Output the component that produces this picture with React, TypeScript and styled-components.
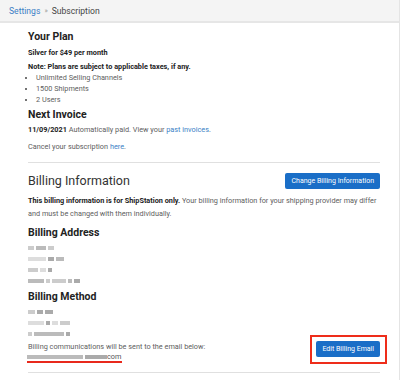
import React from "react";
import styled, { createGlobalStyle } from "styled-components";

const Global = createGlobalStyle`
  html, body { margin: 0; padding: 0; background: #fff; }
  body { font-family: Roboto, "Liberation Sans", Arial, sans-serif; color: #333; }
`;

const Page = styled.div`
  width: 400px;
  height: 380px;
  overflow: hidden;
  border-right: 1px solid #e4e4e4;
  box-sizing: border-box;
`;

const TopBar = styled.div`
  height: 21px;
  background: #f4f4f4;
  border-bottom: 2px solid #e6e6e6;
  display: flex;
  align-items: center;
  padding-left: 9px;
  font-size: 8.6px;
  color: #444;
  gap: 4px;
`;

const Crumb = styled.a`
  color: #3c7fc6;
  text-decoration: none;
`;

const Sep = styled.span`
  color: #999;
  font-size: 7px;
`;

const Content = styled.div`
  padding: 7px 12px 0 28px;
  display: flex;
  flex-direction: column;
`;

const H2 = styled.h2<{ $mt?: number }>`
  margin: ${(p) => p.$mt ?? 0}px 0 0 0;
  font-size: 10.5px;
  font-weight: 700;
  color: #222;
  line-height: 14px;
`;

const Bold = styled.div<{ $mt?: number }>`
  margin-top: ${(p) => p.$mt ?? 0}px;
  font-size: 7.3px;
  font-weight: 700;
  color: #222;
  line-height: 10px;
`;

const List = styled.ul`
  margin: 0;
  padding-left: 8px;
  list-style: disc;
  font-size: 7.3px;
  color: #606060;
  line-height: 11px;
  li::marker { font-size: 6px; color: #444; }
`;

const Text = styled.p<{ $mt?: number; $lh?: number }>`
  margin: ${(p) => p.$mt ?? 0}px 0 0 0;
  font-size: 7.3px;
  color: #606060;
  line-height: ${(p) => p.$lh ?? 10}px;
  strong { color: #222; font-weight: 700; }
`;

const Link = styled.a`
  color: #3c7fc6;
  text-decoration: none;
`;

const Rule = styled.hr<{ $mt?: number }>`
  border: 0;
  border-top: 1px solid #e0e0e0;
  margin: ${(p) => p.$mt ?? 0}px 0 0 0;
  width: 352px;
`;

const SectionHead = styled.div`
  display: flex;
  align-items: center;
  justify-content: space-between;
  margin-top: 10px;
  width: 352px;
`;

const H1 = styled.h1`
  margin: 0;
  font-size: 12.5px;
  font-weight: 400;
  color: #333;
  line-height: 16px;
`;

const Button = styled.button`
  background: #1a6ec7;
  color: #fff;
  border: 0;
  border-radius: 2px;
  height: 16px;
  padding: 0 6px;
  font-family: inherit;
  font-size: 7px;
  line-height: 16px;
  cursor: pointer;
`;

const RedactedLine = styled.div`
  display: flex;
  gap: 2px;
  height: 11px;
  align-items: center;
`;

const Blob = styled.span<{ $w: number; $shade: string }>`
  display: inline-block;
  width: ${(p) => p.$w}px;
  height: 4px;
  background: ${(p) => p.$shade};
  filter: blur(0.6px);
`;

const EmailRow = styled.div`
  display: flex;
  align-items: flex-end;
  justify-content: space-between;
  width: 352px;
  margin-top: -4px;
`;

const EmailText = styled.div`
  display: flex;
  flex-direction: column;
  margin-bottom: 1px;
`;

const Email = styled.div`
  display: inline-flex;
  align-items: center;
  align-self: flex-start;
  height: 9px;
  font-size: 7.3px;
  color: #555;
  border-bottom: 2px solid #e8291c;
  padding-right: 1px;
  margin-left: -1px;
`;

const RedBox = styled.div`
  border: 2px solid #ee2d1a;
  padding: 4px 5px 5px 4px;
  margin-right: -7px;
  display: flex;
`;

type L = [number, string][];
const addr: L[] = [
  [[6, "#ccc"], [10, "#bbb"], [6, "#ccc"]],
  [[18, "#ddd"], [6, "#aaa"], [8, "#bbb"]],
  [[10, "#ccc"], [6, "#ddd"], [4, "#aaa"]],
  [[16, "#bbb"], [4, "#ccc"], [14, "#ccc"], [4, "#bbb"], [6, "#aaa"]],
];
const method: L[] = [
  [[7, "#ccc"], [6, "#aaa"], [8, "#aaa"]],
  [[16, "#ddd"], [4, "#aaa"], [6, "#ddd"], [10, "#ccc"]],
  [[4, "#ccc"], [30, "#bbb"], [4, "#aaa"]],
];

const Redacted = ({ lines }: { lines: L[] }) => (
  <>
    {lines.map((l, i) => (
      <RedactedLine key={i}>
        {l.map(([w, s], j) => (
          <Blob key={j} $w={w} $shade={s} />
        ))}
      </RedactedLine>
    ))}
  </>
);

const Block = styled.div<{ $mt?: number }>`
  margin-top: ${(p) => p.$mt ?? 0}px;
  display: flex;
  flex-direction: column;
`;

export default function App() {
  return (
    <Page>
      <Global />
      <TopBar>
        <Crumb>Settings</Crumb>
        <Sep>»</Sep>
        <span>Subscription</span>
      </TopBar>
      <Content>
        <H2>Your Plan</H2>
        <Bold $mt={4}>Silver for $49 per month</Bold>
        <Bold $mt={4}>Note: Plans are subject to applicable taxes, if any.</Bold>
        <List>
          <li>Unlimited Selling Channels</li>
          <li>1500 Shipments</li>
          <li>2 Users</li>
        </List>
        <H2 $mt={3}>Next Invoice</H2>
        <Text $mt={3}>
          <strong>11/09/2021</strong> Automatically paid. View your <Link>past invoices</Link>.
        </Text>
        <Text $mt={7}>
          Cancel your subscription <Link>here</Link>.
        </Text>
        <Rule $mt={10} />
        <SectionHead>
          <H1>Billing Information</H1>
          <Button>Change Billing Information</Button>
        </SectionHead>
        <Text $mt={5} $lh={13}>
          <strong>This billing information is for ShipStation only.</strong> Your billing information for your
          shipping provider may differ and must be changed with them individually.
        </Text>
        <H2 $mt={6}>Billing Address</H2>
        <Block $mt={2}>
          <Redacted lines={addr} />
        </Block>
        <H2 $mt={4}>Billing Method</H2>
        <Block $mt={2}>
          <Redacted lines={method} />
        </Block>
        <EmailRow>
          <EmailText>
            <Text>Billing communications will be sent to the email below:</Text>
            <Email>
              <Redacted lines={[[[56, "#bbb"], [22, "#aaa"]]]} />
              com
            </Email>
          </EmailText>
          <RedBox>
            <Button>Edit Billing Email</Button>
          </RedBox>
        </EmailRow>
        <Rule $mt={8} />
      </Content>
    </Page>
  );
}
